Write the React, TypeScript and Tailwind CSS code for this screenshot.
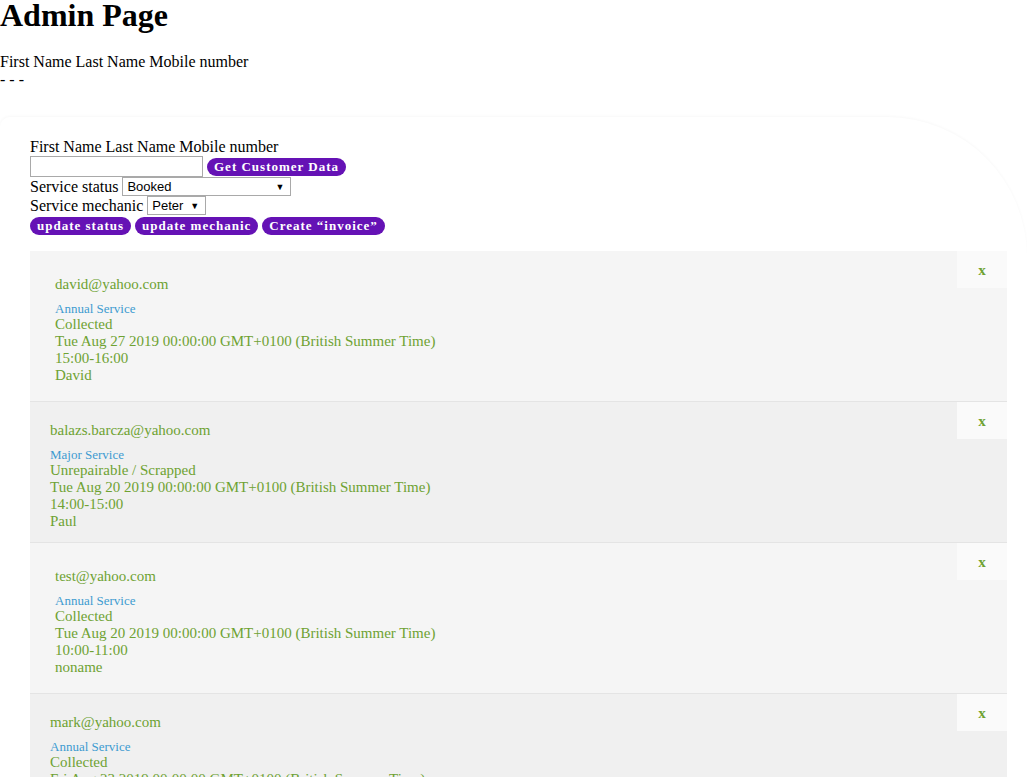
import React from 'react';

type Booking = {
  email: string;
  service: string;
  status: string;
  date: string;
  slot: string;
  mechanic: string;
};

const BOOKINGS: Booking[] = [
  { email: 'david@yahoo.com', service: 'Annual Service', status: 'Collected', date: 'Tue Aug 27 2019 00:00:00 GMT+0100 (British Summer Time)', slot: '15:00-16:00', mechanic: 'David' },
  { email: 'balazs.barcza@yahoo.com', service: 'Major Service', status: 'Unrepairable / Scrapped', date: 'Tue Aug 20 2019 00:00:00 GMT+0100 (British Summer Time)', slot: '14:00-15:00', mechanic: 'Paul' },
  { email: 'test@yahoo.com', service: 'Annual Service', status: 'Collected', date: 'Tue Aug 20 2019 00:00:00 GMT+0100 (British Summer Time)', slot: '10:00-11:00', mechanic: 'noname' },
  { email: 'mark@yahoo.com', service: 'Annual Service', status: 'Collected', date: 'Fri Aug 23 2019 00:00:00 GMT+0100 (British Summer Time)', slot: '09:00-10:00', mechanic: 'Peter' },
];

function PillButton({ children }: { children: React.ReactNode }) {
  return (
    <button className="inline-block h-[18px] px-[7px] rounded-full bg-[#6512b5] text-white text-[13px] leading-[18px] font-bold tracking-[1px] align-top">
      {children}
    </button>
  );
}

function FakeSelect({ value, width }: { value: string; width: string }) {
  return (
    <span
      className={`inline-flex items-center justify-between h-[19px] pl-[4px] pr-[6px] border border-[#a9a9a9] bg-white text-[13px] font-['Liberation_Sans',Arial,sans-serif] align-top ${width}`}
    >
      <span>{value}</span>
      <span className="text-[9px]">▼</span>
    </span>
  );
}

function BookingRow({ booking, odd }: { booking: Booking; odd: boolean }) {
  return (
    <div
      className={`flex justify-between border-b border-[#e4e4e4] text-[#6ea232] ${
        odd ? 'bg-[#f5f5f5] pl-[25px] pt-[25px] pb-[17px]' : 'bg-[#f0f0f0] pl-[20px] pt-[20px] pb-[12px]'
      }`}
    >
      <div className="text-[15px] leading-[17px]">
        <div className="mb-[8px]">{booking.email}</div>
        <div className="text-[13px] leading-[15px] text-[#3d9bd0]">{booking.service}</div>
        <div>{booking.status}</div>
        <div>{booking.date}</div>
        <div>{booking.slot}</div>
        <div>{booking.mechanic}</div>
      </div>
      <div className={`self-start w-[50px] h-[37px] flex items-center justify-center bg-[#fafafa] font-bold text-[15px] ${odd ? '-mt-[25px]' : '-mt-[20px]'}`}>
        x
      </div>
    </div>
  );
}

export default function App() {
  return (
    <div className="min-h-[777px] bg-white text-black font-['Liberation_Serif','Times_New_Roman',serif] text-[16px] leading-[18px]">
      <h1 className="m-0 text-[32px] leading-[31px] font-bold">Admin Page</h1>
      <div className="mt-[22px]">First Name Last Name Mobile number</div>
      <div>- - -</div>

      {/* Admin panel */}
      <div className="mt-[28px] pt-[21px] pl-[30px] pr-[20px] rounded-tr-[140px] rounded-tl-[10px] shadow-[0_-1px_3px_rgba(0,0,0,0.03)]">
        <div>First Name Last Name Mobile number</div>
        <div className="flex items-center gap-[4px] h-[21px]">
          <input className="w-[173px] h-[21px] border border-[#a9a9a9] bg-white px-[2px] outline-none" />
          <PillButton>Get Customer Data</PillButton>
        </div>
        <div className="flex items-center gap-[4px] h-[19px]">
          <span>Service status</span>
          <FakeSelect value="Booked" width="w-[169px]" />
        </div>
        <div className="flex items-center gap-[4px] h-[19px]">
          <span>Service mechanic</span>
          <FakeSelect value="Peter" width="w-[59px]" />
        </div>
        <div className="flex gap-[4px] mt-[2px]">
          <PillButton>update status</PillButton>
          <PillButton>update mechanic</PillButton>
          <PillButton>Create “invoice”</PillButton>
        </div>

        {/* Bookings */}
        <div className="mt-[16px]">
          {BOOKINGS.map((b, i) => (
            <BookingRow key={b.email} booking={b} odd={i % 2 === 0} />
          ))}
        </div>
      </div>
    </div>
  );
}
